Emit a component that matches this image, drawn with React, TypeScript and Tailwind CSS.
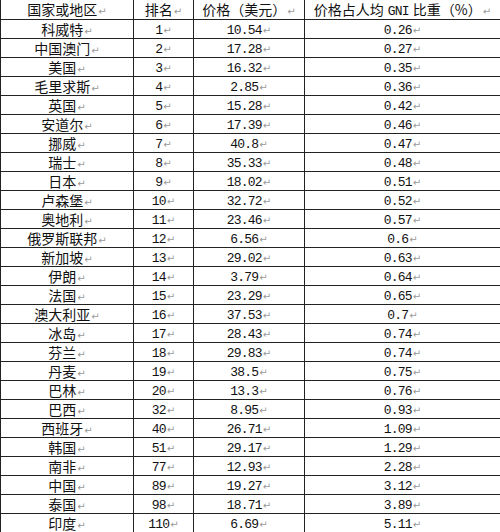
const rows: [string, string, string, string][] = [
  ['科威特', '1', '10.54', '0.26'],
  ['中国澳门', '2', '17.28', '0.27'],
  ['美国', '3', '16.32', '0.35'],
  ['毛里求斯', '4', '2.85', '0.36'],
  ['英国', '5', '15.28', '0.42'],
  ['安道尔', '6', '17.39', '0.46'],
  ['挪威', '7', '40.8', '0.47'],
  ['瑞士', '8', '35.33', '0.48'],
  ['日本', '9', '18.02', '0.51'],
  ['卢森堡', '10', '32.72', '0.52'],
  ['奥地利', '11', '23.46', '0.57'],
  ['俄罗斯联邦', '12', '6.56', '0.6'],
  ['新加坡', '13', '29.02', '0.63'],
  ['伊朗', '14', '3.79', '0.64'],
  ['法国', '15', '23.29', '0.65'],
  ['澳大利亚', '16', '37.53', '0.7'],
  ['冰岛', '17', '28.43', '0.74'],
  ['芬兰', '18', '29.83', '0.74'],
  ['丹麦', '19', '38.5', '0.75'],
  ['巴林', '20', '13.3', '0.76'],
  ['巴西', '32', '8.95', '0.93'],
  ['西班牙', '40', '26.71', '1.09'],
  ['韩国', '51', '29.17', '1.29'],
  ['南非', '77', '12.93', '2.28'],
  ['中国', '89', '19.27', '3.12'],
  ['泰国', '98', '18.71', '3.89'],
  ['印度', '110', '6.69', '5.11'],
];

const cjk = "inline-block leading-[15px] font-['Noto_Sans_CJK_SC',sans-serif] text-[14px]";
const mono = "inline-block leading-[15px] font-['Liberation_Mono','Noto_Sans_CJK_SC',monospace] text-[13px] tracking-[-0.8px]";

// Word paragraph mark after each cell
function Mark() {
  return (
    <span className="inline-block leading-[12px] font-['DejaVu_Sans',sans-serif] text-[10px] text-[#9a9a9a] ml-px tracking-normal">
      ↵
    </span>
  );
}

function Cell({ w, children }: { w: string; children: React.ReactNode }) {
  return (
    <div className={`${w} border-l border-[#222] h-full flex items-center justify-center whitespace-nowrap`}>
      <span className="leading-[16px]">{children}</span>
    </div>
  );
}

export default function App() {
  return (
    <div className="w-[500px] h-[532px] bg-white text-[#111] overflow-hidden">
      {/* header */}
      <div className="flex h-[19px]">
        <Cell w="w-[133px]">
          <span className={cjk}>国家或地区</span>
          <Mark />
        </Cell>
        <Cell w="w-[60px]">
          <span className={cjk}>排名</span>
          <Mark />
        </Cell>
        <Cell w="w-[111px]">
          <span className={cjk}>价格（美元）</span>
          <Mark />
        </Cell>
        <Cell w="flex-1">
          <span className={cjk}>价格占人均</span>
          <span className={`${mono} mx-[4px]`}>GNI</span>
          <span className={cjk}>比重（%）</span>
          <Mark />
        </Cell>
      </div>

      {rows.map(([name, rank, price, ratio]) => (
        <div key={name} className="flex h-[19px] border-t border-[#222]">
          <Cell w="w-[133px]">
            <span className={cjk}>{name}</span>
            <Mark />
          </Cell>
          <Cell w="w-[60px]">
            <span className={mono}>{rank}</span>
            <Mark />
          </Cell>
          <Cell w="w-[111px]">
            <span className={mono}>{price}</span>
            <Mark />
          </Cell>
          <Cell w="flex-1">
            <span className={mono}>{ratio}</span>
            <Mark />
          </Cell>
        </div>
      ))}
    </div>
  );
}
